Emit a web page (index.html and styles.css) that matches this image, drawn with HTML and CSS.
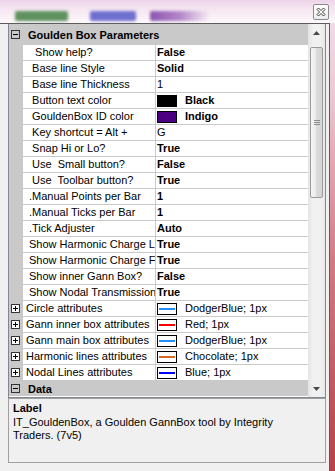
FILE: index.html
```html
<!DOCTYPE html>
<html lang="en">
<head>
<meta charset="UTF-8">
<meta name="viewport" content="width=device-width, initial-scale=1.0">
<title>Goulden Box Parameters</title>
<link rel="stylesheet" href="styles.css">
</head>
<body>

<!-- Размытая полоса сверху (стекло окна) -->
<div class="titlebar">
  <span class="blob blob-green"></span>
  <span class="blob blob-blue"></span>
  <span class="blob blob-purple"></span>
  <span class="close-btn">
    <svg width="10" height="10" viewBox="0 0 10 10">
      <path d="M1 2.5 L2.5 1 L5 3.5 L7.5 1 L9 2.5 L6.5 5 L9 7.5 L7.5 9 L5 6.5 L2.5 9 L1 7.5 L3.5 5 Z" fill="#fff" stroke="#3c3c3c" stroke-width="1"/>
    </svg>
  </span>
</div>

<div class="window">

  <!-- Сетка свойств -->
  <div class="grid">
    <div class="rows">

      <div class="cat">
        <span class="toggle"><svg width="9" height="9" viewBox="0 0 9 9"><rect x="0.5" y="0.5" width="8" height="8" fill="none" stroke="#333"/><path d="M2 4.5 H7" stroke="#000"/></svg></span>
        <span class="cat-title">Goulden Box Parameters</span>
      </div>

      <div class="prop"><span class="gutter"></span><span class="name">  Show help?</span><span class="value bold">False</span></div>
      <div class="prop"><span class="gutter"></span><span class="name"> Base line Style</span><span class="value bold">Solid</span></div>
      <div class="prop"><span class="gutter"></span><span class="name"> Base line Thickness</span><span class="value">1</span></div>
      <div class="prop"><span class="gutter"></span><span class="name"> Button text color</span><span class="value bold"><span class="swatch swatch-black"></span>Black</span></div>
      <div class="prop"><span class="gutter"></span><span class="name"> GouldenBox ID color</span><span class="value bold"><span class="swatch swatch-indigo"></span>Indigo</span></div>
      <div class="prop"><span class="gutter"></span><span class="name"> Key shortcut = Alt +</span><span class="value">G</span></div>
      <div class="prop"><span class="gutter"></span><span class="name"> Snap Hi or Lo?</span><span class="value bold">True</span></div>
      <div class="prop"><span class="gutter"></span><span class="name"> Use  Small button?</span><span class="value bold">False</span></div>
      <div class="prop"><span class="gutter"></span><span class="name"> Use  Toolbar button?</span><span class="value bold">True</span></div>
      <div class="prop"><span class="gutter"></span><span class="name">.Manual Points per Bar</span><span class="value bold">1</span></div>
      <div class="prop"><span class="gutter"></span><span class="name">.Manual Ticks per Bar</span><span class="value bold">1</span></div>
      <div class="prop"><span class="gutter"></span><span class="name">.Tick Adjuster</span><span class="value bold">Auto</span></div>
      <div class="prop"><span class="gutter"></span><span class="name">Show Harmonic Charge L</span><span class="value bold">True</span></div>
      <div class="prop"><span class="gutter"></span><span class="name">Show Harmonic Charge F</span><span class="value bold">True</span></div>
      <div class="prop"><span class="gutter"></span><span class="name">Show inner Gann Box?</span><span class="value bold">False</span></div>
      <div class="prop"><span class="gutter"></span><span class="name">Show Nodal Transmission</span><span class="value bold">True</span></div>

      <div class="prop"><span class="gutter"><span class="toggle"><svg width="9" height="9" viewBox="0 0 9 9"><rect x="0.5" y="0.5" width="8" height="8" fill="#fff" stroke="#333"/><path d="M2 4.5 H7 M4.5 2 V7" stroke="#000"/></svg></span></span><span class="name name-exp">Circle attributes</span><span class="value"><span class="pen pen-dodger"></span>DodgerBlue; 1px</span></div>
      <div class="prop"><span class="gutter"><span class="toggle"><svg width="9" height="9" viewBox="0 0 9 9"><rect x="0.5" y="0.5" width="8" height="8" fill="#fff" stroke="#333"/><path d="M2 4.5 H7 M4.5 2 V7" stroke="#000"/></svg></span></span><span class="name name-exp">Gann inner box attributes</span><span class="value"><span class="pen pen-red"></span>Red; 1px</span></div>
      <div class="prop"><span class="gutter"><span class="toggle"><svg width="9" height="9" viewBox="0 0 9 9"><rect x="0.5" y="0.5" width="8" height="8" fill="#fff" stroke="#333"/><path d="M2 4.5 H7 M4.5 2 V7" stroke="#000"/></svg></span></span><span class="name name-exp">Gann main box attributes</span><span class="value"><span class="pen pen-dodger"></span>DodgerBlue; 1px</span></div>
      <div class="prop"><span class="gutter"><span class="toggle"><svg width="9" height="9" viewBox="0 0 9 9"><rect x="0.5" y="0.5" width="8" height="8" fill="#fff" stroke="#333"/><path d="M2 4.5 H7 M4.5 2 V7" stroke="#000"/></svg></span></span><span class="name name-exp">Harmonic lines attributes</span><span class="value"><span class="pen pen-chocolate"></span>Chocolate; 1px</span></div>
      <div class="prop"><span class="gutter"><span class="toggle"><svg width="9" height="9" viewBox="0 0 9 9"><rect x="0.5" y="0.5" width="8" height="8" fill="#fff" stroke="#333"/><path d="M2 4.5 H7 M4.5 2 V7" stroke="#000"/></svg></span></span><span class="name name-exp">Nodal Lines attributes</span><span class="value"><span class="pen pen-blue"></span>Blue; 1px</span></div>

      <div class="cat cat-small">
        <span class="toggle"><svg width="9" height="9" viewBox="0 0 9 9"><rect x="0.5" y="0.5" width="8" height="8" fill="none" stroke="#333"/><path d="M2 4.5 H7" stroke="#000"/></svg></span>
        <span class="cat-title">Data</span>
      </div>

    </div>

    <!-- Полоса прокрутки -->
    <div class="scrollbar">
      <span class="sb-btn"><svg width="7" height="4" viewBox="0 0 7 4"><path d="M0 4 L3.5 0 L7 4 Z" fill="#4a4a4a"/></svg></span>
      <span class="thumb">
        <svg width="6" height="5" viewBox="0 0 6 5"><path d="M0 0.5 H6 M0 2.5 H6 M0 4.5 H6" stroke="#8a8a8a"/></svg>
      </span>
      <span class="sb-space"></span>
      <span class="sb-btn"><svg width="7" height="4" viewBox="0 0 7 4"><path d="M0 0 L3.5 4 L7 0 Z" fill="#4a4a4a"/></svg></span>
    </div>
  </div>

  <!-- Описание выбранного свойства -->
  <div class="desc">
    <div class="desc-title">Label</div>
    <div class="desc-text">IT_GouldenBox, a Goulden GannBox tool by Integrity<br>Traders. (7v5)</div>
  </div>

</div>

</body>
</html>
```

FILE: styles.css
```css
body {
    margin: 0;
    width: 335px;
    height: 471px;
    overflow: hidden;
    font-family: "Liberation Sans", Arial, sans-serif;
    font-size: 11px;
    color: #000;
    background: linear-gradient(to bottom, #f3e0ee 0, #ecc8d4 20%, #d27a84 55%, #bb3f47 100%); /* красный фон справа */
}
.titlebar {
    height: 23px;
    display: flex;
    align-items: flex-start;
    overflow: hidden;
    background: linear-gradient(to bottom, #eed4ea 0, #f6e8f2 45%, #fdf8fb 100%);
}
.blob {
    height: 10px;
    margin-top: 11px;
    border-radius: 2px;
    filter: blur(1.6px);
}
.blob-green {
    width: 53px;
    margin-left: 15px;
    background: #5f925f;
}
.blob-blue {
    width: 46px;
    margin-left: 22px;
    background: #6f6fd0;
}
.blob-purple {
    width: 60px;
    margin-left: 14px;
    background: linear-gradient(to right, #8a56ae, #b386c8 50%, rgba(220, 180, 225, 0));
}
.close-btn {
    margin-left: auto;
    margin-right: 6px;
    margin-top: 4px;
    width: 16px;
    height: 16px;
    box-sizing: border-box;
    border: 1px solid #8a8a8a;
    border-radius: 2px;
    background: linear-gradient(to bottom, #ffffff, #ececec);
    display: flex;
    align-items: center;
    justify-content: center;
}
.window {
    width: 330px;
    height: 448px;
    box-sizing: border-box;
    padding-left: 8px;
    background: #f0f0f0;
    border-top: 1px solid #5c5c5c;
    border-right: 1px solid #5c5c5c;
}
.grid {
    width: 318px;
    height: 374px;
    box-sizing: border-box;
    border: 1px solid #828790;
    border-top: none;
    display: flex;
    background: #fff;
}
.rows {
    width: 299px;
    flex: none;
}
.cat {
    height: 21px;
    display: flex;
    align-items: center;
    background: #c9c9c9;
    font-weight: bold;
}
.cat-small {
    height: 15px;
}
.toggle {
    width: 9px;
    height: 9px;
    margin-left: 2px;
    display: flex;
}
.cat-title {
    margin-left: 8px;
}
.prop {
    height: 16px;
    display: flex;
    box-sizing: border-box;
    border-bottom: 1px solid #c9c9c9;
    line-height: 15px;
}
.gutter {
    width: 14px;
    flex: none;
    display: flex;
    align-items: center;
    background: #c9c9c9;
}
.name {
    width: 133px;
    flex: none;
    padding-left: 6px;
    box-sizing: border-box;
    border-right: 1px solid #c9c9c9;
    white-space: pre;
    overflow: hidden;
}
.name-exp {
    padding-left: 3px;
}
.value {
    flex: 1;
    padding-left: 1px;
    display: flex;
    align-items: center;
    white-space: pre;
}
.bold {
    font-weight: bold;
}
.swatch {
    width: 20px;
    height: 12px;
    box-sizing: border-box;
    border: 1px solid #000;
    margin-right: 8px;
}
.swatch-black {
    background: #000;
}
.swatch-indigo {
    background: #4b0082;
}
.pen {
    width: 20px;
    height: 12px;
    box-sizing: border-box;
    border: 1px solid #000;
    margin-right: 8px;
    display: flex;
    align-items: center;
    padding: 0 1px;
    background: #fff;
}
.pen::after {
    content: "";
    flex: 1;
    height: 2px;
}
.pen-dodger::after { background: #1e90ff; }
.pen-red::after { background: #ff0000; }
.pen-chocolate::after { background: #d2691e; }
.pen-blue::after { background: #0000ff; }
.scrollbar {
    width: 17px;
    display: flex;
    flex-direction: column;
    background: linear-gradient(to right, #e4e4e4, #f1f1f1 30%, #f1f1f1 70%, #e8e8e8);
}
.sb-btn {
    height: 17px;
    flex: none;
    display: flex;
    align-items: center;
    justify-content: center;
}
.thumb {
    height: 151px;
    margin: 6px 2px 0;
    box-sizing: border-box;
    border: 1px solid #9a9a9a;
    border-radius: 2px;
    background: linear-gradient(to right, #f6f6f6, #e9e9e9 50%, #dcdcdc 50%, #d4d4d4);
    display: flex;
    align-items: center;
    justify-content: center;
}
.sb-space {
    flex: 1;
}
.desc {
    width: 318px;
    height: 65px;
    box-sizing: border-box;
    border: 1px solid #a0a0a0;
    padding: 2px 4px;
}
.desc-title {
    font-weight: bold;
    line-height: 14px;
    margin-bottom: 1px;
}
.desc-text {
    line-height: 13px;
}
```
